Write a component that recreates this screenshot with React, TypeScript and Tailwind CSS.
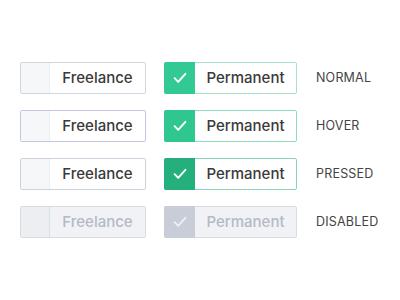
import React from 'react';

type State = 'normal' | 'hover' | 'pressed' | 'disabled';

const rows: { state: State; label: string }[] = [
  { state: 'normal', label: 'NORMAL' },
  { state: 'hover', label: 'HOVER' },
  { state: 'pressed', label: 'PRESSED' },
  { state: 'disabled', label: 'DISABLED' },
];

function Check({ color }: { color: string }) {
  return (
    <svg width="14" height="12" viewBox="0 0 14 12" fill="none">
      <path d="M1.6 6.2 L5.2 9.9 L12.4 1.8" stroke={color} strokeWidth="1.9" strokeLinecap="round" strokeLinejoin="round" />
    </svg>
  );
}

function Unchecked({ state }: { state: State }) {
  const box = {
    normal: 'border-[#d3d6de] bg-white',
    hover: 'border-[#c9c4e2] bg-white',
    pressed: 'border-[#cfd2de] bg-white',
    disabled: 'border-[#d8dbe2] bg-[#f1f2f5]',
  }[state];
  const square = state === 'disabled' ? 'bg-[#eceef2] border-[#dcdfe5]' : 'bg-[#f6f7f9] border-[#eceef2]';
  const text = state === 'disabled' ? 'text-[#b4bac6]' : 'text-[#3a3a3a]';
  return (
    <div className={`flex h-[32px] w-[126px] items-stretch rounded-[2px] border ${box}`}>
      <div className={`w-[29px] border-r ${square}`} />
      <div className={`flex flex-1 items-center justify-center text-[15px] font-medium ${text}`}>Freelance</div>
    </div>
  );
}

function Checked({ state }: { state: State }) {
  const box = {
    normal: 'border-[#a7e3cb] bg-white',
    hover: 'border-[#8fdbbd] bg-white',
    pressed: 'border-[#8cd4b8] bg-white',
    disabled: 'border-[#d8dbe2] bg-[#f1f2f5]',
  }[state];
  const square = {
    normal: 'bg-[#33c995]',
    hover: 'bg-[#2fc690]',
    pressed: 'bg-[#24b07c]',
    disabled: 'bg-[#c8cdd7]',
  }[state];
  const text = state === 'disabled' ? 'text-[#b4bac6]' : 'text-[#3a3a3a]';
  return (
    <div className={`flex h-[32px] w-[133px] items-stretch rounded-[2px] border ${box}`}>
      <div className={`-my-px -ml-px flex w-[31px] items-center justify-center rounded-l-[2px] ${square}`}>
        <Check color={state === 'disabled' ? '#eef0f3' : '#ffffff'} />
      </div>
      <div className={`flex flex-1 items-center justify-center text-[15px] font-medium ${text}`}>Permanent</div>
    </div>
  );
}

export default function App() {
  return (
    <div
      className="h-[300px] w-[400px] bg-white pl-[20px] pt-[62px]"
      style={{ fontFamily: 'Inter, "Noto Sans", sans-serif' }}
    >
      <div className="flex flex-col gap-[16px]">
        {rows.map((row) => (
          <div key={row.state} className="flex items-center">
            <Unchecked state={row.state} />
            <div className="ml-[18px]">
              <Checked state={row.state} />
            </div>
            <div className="ml-[19px] text-[12.5px] tracking-[0.2px] text-[#444]">{row.label}</div>
          </div>
        ))}
      </div>
    </div>
  );
}
